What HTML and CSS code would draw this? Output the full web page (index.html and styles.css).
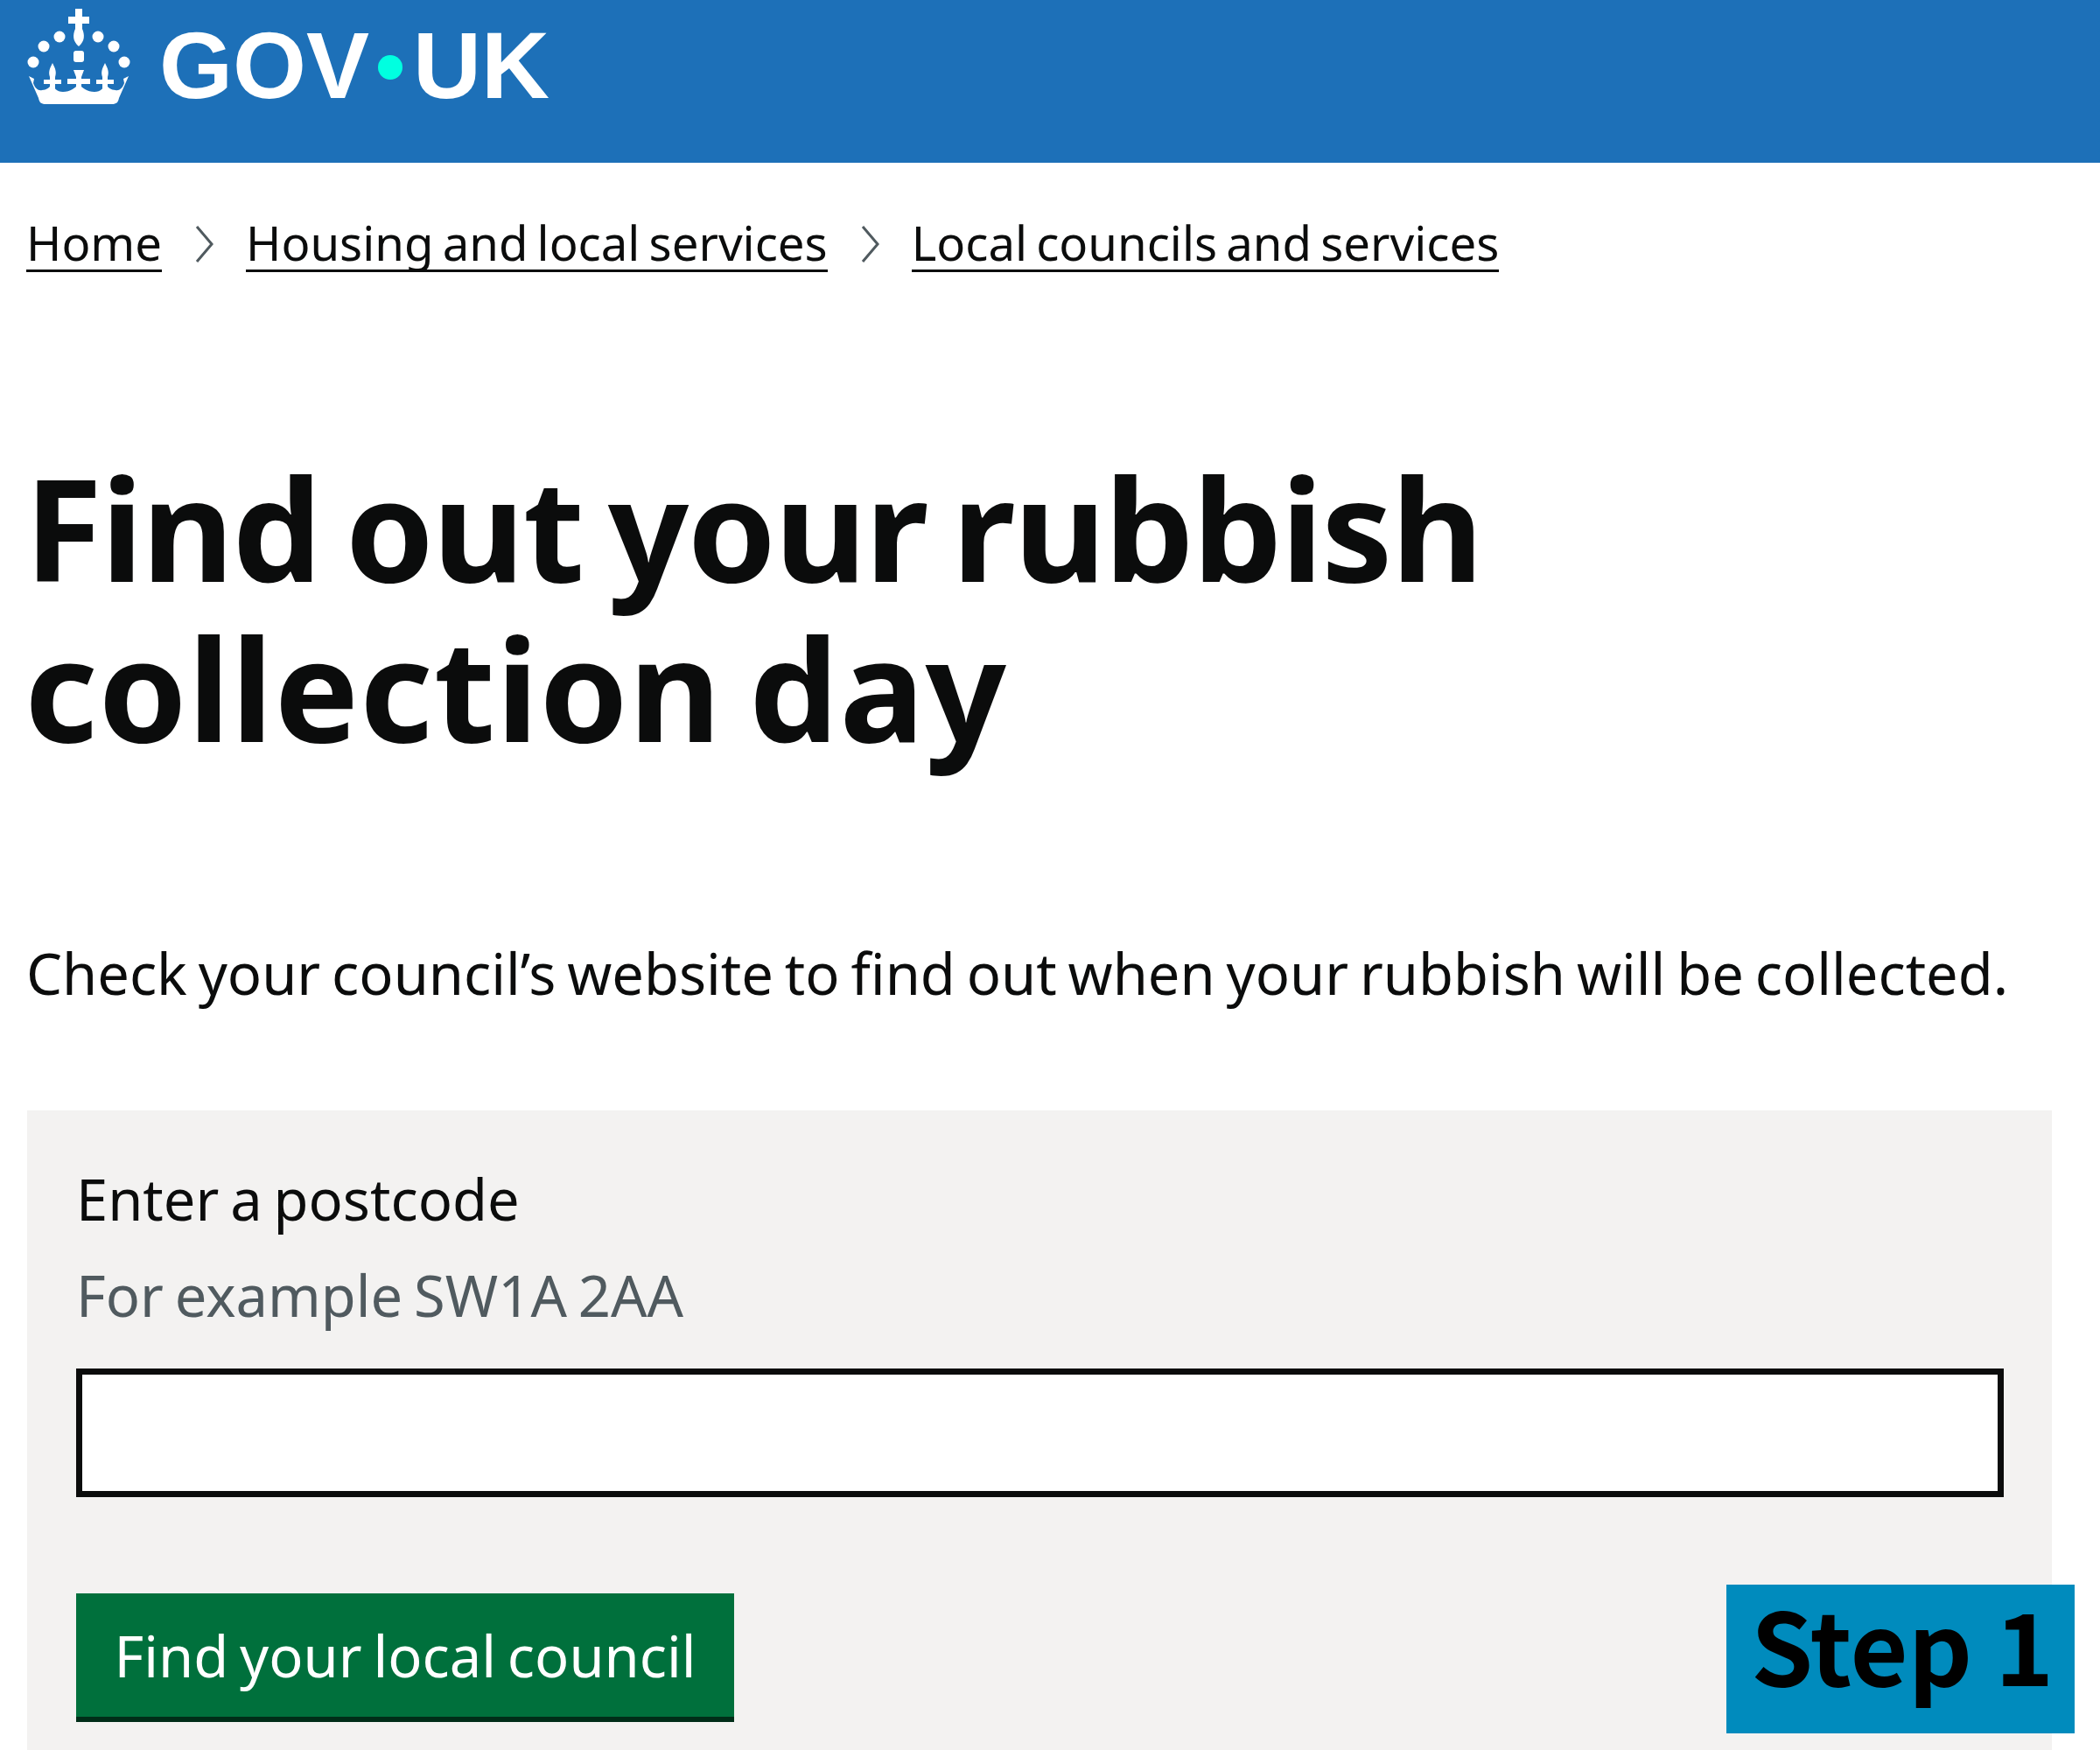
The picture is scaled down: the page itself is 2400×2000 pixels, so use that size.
FILE: index.html
```html
<!DOCTYPE html>
<html lang="en">
    <head>
        <meta charset="utf-8">
        <title>Find out your rubbish collection day - GOV.UK</title>
        <link rel="stylesheet" href="styles.css">
    </head>
    <body>
        <header class="topbar">
            <svg class="crown" viewBox="0 0 140 130" aria-hidden="true">
                <g fill="#fff">
                    <path d="M66 10h8v9h8v8h-8v6c3 7 3 14-4 20-7-6-7-13-4-20v-6h-8v-8h8z"/>
                    <circle cx="48" cy="42" r="6.5"/>
                    <circle cx="92" cy="42" r="6.5"/>
                    <circle cx="30" cy="53" r="6.5"/>
                    <circle cx="110" cy="53" r="6.5"/>
                    <circle cx="18" cy="71" r="6.5"/>
                    <circle cx="122" cy="71" r="6.5"/>
                    <rect x="64" y="58" width="12" height="13" rx="3"/>
                    <path d="M40 72c3 6 5 10 3 16v3h7v5h-7v8h-6v-8h-7v-5h7v-3c-2-6 0-10 3-16z"/>
                    <path d="M100 72c3 6 5 10 3 16v3h7v5h-7v8h-6v-8h-7v-5h7v-3c-2-6 0-10 3-16z"/>
                    <path d="M64 80h12l-3 8v2h10v6H73v8h-6v-8H57v-6h10v-2z"/>
                    <path d="M13 87l6 3-1 5c2 6 6 9 10 8 5 0 9-3 11-7 2 4 6 9 13 9 8 0 15-5 18-9 3 4 10 9 18 9 7 0 11-5 13-9 2 4 6 7 11 7 4 1 8-2 10-8l-1-5 6-3-11 25c-1 5-3 7-8 7H32c-5 0-7-2-8-7z"/>
                </g>
            </svg>
            <span class="wordmark">GOV<span class="wordmark-dot"></span>UK</span>
        </header>

        <nav class="crumbs">
            <a class="crumb" href="#">Home</a>
            <svg class="chevron" viewBox="0 0 24 48" aria-hidden="true"><path d="M4 4l17 20L4 44"/></svg>
            <a class="crumb" href="#">Housing and local services</a>
            <svg class="chevron" viewBox="0 0 24 48" aria-hidden="true"><path d="M4 4l17 20L4 44"/></svg>
            <a class="crumb" href="#">Local councils and services</a>
        </nav>

        <main class="content">
            <h1 class="title">Find out your rubbish collection day</h1>
            <p class="lead">Check your council’s website to find out when your rubbish will be collected.</p>

            <form class="panel">
                <label class="panel-label" for="postcode">Enter a postcode</label>
                <div class="panel-hint">For example SW1A 2AA</div>
                <input class="panel-input" id="postcode" type="text">
                <button class="panel-button" type="button">Find your local council</button>
            </form>
        </main>

        <div class="step-badge">Step 1</div>
    </body>
</html>
```

FILE: styles.css
```css
html, body {
    margin: 0;
    height: 2000px;
    overflow: hidden;
}
body {
    position: relative;
    background: #fff;
    color: #0b0c0c;
    font-family: "Noto Sans", "Liberation Sans", sans-serif;
}
.topbar {
    height: 186px;
    box-sizing: border-box;
    padding: 0 0 0 20px;
    display: flex;
    align-items: flex-start;
    background: #1d70b8;
}
.crown {
    width: 140px;
    height: 130px;
}
.wordmark {
    margin: 12px 0 0 22px;
    display: flex;
    align-items: center;
    color: #fff;
    font-family: "Liberation Sans", sans-serif;
    font-weight: bold;
    font-size: 108px;
    line-height: 126px;
}
.wordmark-dot {
    width: 28px;
    height: 28px;
    margin: 4px 12px 0 10px;
    border-radius: 50%;
    background: #00ffe0;
}
.crumbs {
    padding: 60px 0 0 30px;
    display: flex;
    align-items: center;
    font-size: 54.5px;
    line-height: 62px;
}
.crumb {
    color: #0b0c0c;
    text-decoration: none;
    border-bottom: 3px solid #0b0c0c;
    word-spacing: -4px;
}
.chevron {
    width: 24px;
    height: 48px;
    margin: 0 36px;
    fill: none;
    stroke: #505a5f;
    stroke-width: 3;
}
.content {
    padding: 0 0 0 31px;
}
.title {
    width: 1800px;
    margin: 0 0 0 -3px;
    padding-top: 200px;
    font-size: 162px;
    line-height: 183px;
    font-weight: bold;
    word-spacing: -12px;
    letter-spacing: 1px;
}
.title::first-line {
    letter-spacing: -1.7px;
}
.lead {
    margin: 0 0 0 -1px;
    padding-top: 195px;
    font-size: 65px;
    line-height: 80px;
    word-spacing: -4px;
}
.panel {
    width: 2314px;
    height: 731px;
    margin-top: 117px;
    box-sizing: border-box;
    padding: 61px 56px 0;
    display: flex;
    flex-direction: column;
    align-items: flex-start;
    background: #f3f2f1;
}
.panel-label {
    font-size: 65px;
    line-height: 80px;
    word-spacing: -4px;
}
.panel-hint {
    margin-top: 30px;
    color: #505a5f;
    font-size: 65px;
    line-height: 80px;
    word-spacing: -4px;
}
.panel-input {
    width: 2203px;
    height: 147px;
    margin-top: 44px;
    box-sizing: border-box;
    border: 7px solid #0b0c0c;
    background: #fff;
}
.panel-button {
    width: 752px;
    height: 147px;
    margin-top: 110px;
    padding: 0 0 6px;
    border: 0;
    box-shadow: inset 0 -6px 0 #002d18;
    background: #00703c;
    color: #fff;
    font-family: inherit;
    font-size: 65px;
    word-spacing: -4px;
}
.step-badge {
    position: absolute;
    left: 1973px;
    top: 1811px;
    width: 398px;
    height: 170px;
    box-sizing: border-box;
    padding-left: 28px;
    background: #008bbd;
    color: #000;
    font-family: "Noto Sans CJK SC", "Noto Sans", sans-serif;
    font-weight: bold;
    font-size: 114px;
    line-height: 134px;
}
```
